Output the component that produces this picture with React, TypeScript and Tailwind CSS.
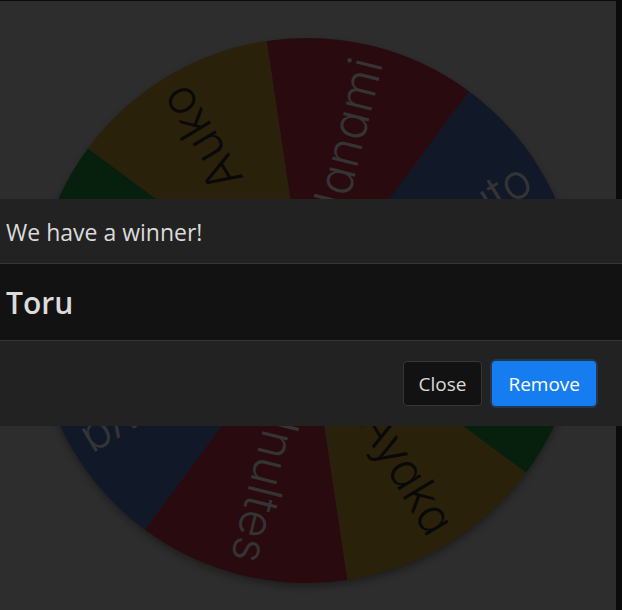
const slices = [
  { name: "Nanami", angle: 284, fill: "#290a0e", ink: "#343434" },
  { name: "Naruto", angle: 329, fill: "#111828", ink: "#343434" },
  { name: "", angle: 14, fill: "#07200e", ink: "#343434" },
  { name: "Ayaka", angle: 59, fill: "#2a210b", ink: "#090909" },
  { name: "Inultes", angle: 104, fill: "#290a0e", ink: "#343434" },
  { name: "Maya", angle: 149, fill: "#111828", ink: "#343434" },
  { name: "", angle: 194, fill: "#07200e", ink: "#343434" },
  { name: "Auko", angle: 239, fill: "#2a210b", ink: "#090909" },
];

const R = 273;

function rim(angle: number) {
  const a = (angle * Math.PI) / 180;
  return `${(R * Math.cos(a)).toFixed(2)} ${(R * Math.sin(a)).toFixed(2)}`;
}

function Wheel() {
  return (
    <svg viewBox="-300 -300 600 600" className="block w-[600px] shrink-0" role="img" aria-label="Wheel of names">
      <defs>
        <filter id="shade" x="-10%" y="-10%" width="120%" height="120%">
          <feDropShadow dx="0" dy="4" stdDeviation="5" floodColor="#000" floodOpacity="0.4" />
        </filter>
      </defs>
      <circle r={R - 1} fill="#202020" filter="url(#shade)" />
      {slices.map((s) => (
        <path key={s.angle} d={`M0 0 L${rim(s.angle - 22.5)} A${R} ${R} 0 0 1 ${rim(s.angle + 22.5)} Z`} fill={s.fill} />
      ))}
      {slices.map((s) => (
        <text
          key={s.angle}
          x="259"
          y="14"
          textAnchor="end"
          fill={s.ink}
          transform={`rotate(${s.angle})`}
          className="font-['Inter',sans-serif] text-[48px] font-light [font-feature-settings:'cv11']"
        >
          {s.name}
        </text>
      ))}
    </svg>
  );
}

export default function App() {
  return (
    <div className="relative flex h-screen flex-col overflow-hidden bg-[#0b0b0b] pt-px pr-[6px] font-['Open_Sans','Noto_Sans',sans-serif]">
      <main className="flex flex-1 justify-center overflow-hidden bg-[#2d2d2d] pt-[10px] pr-[2px]">
        <Wheel />
      </main>
      <div className="absolute inset-0 flex flex-col justify-center pt-[14px]">
        <section role="dialog" aria-labelledby="winner-title" className="w-full overflow-hidden bg-[#222] text-[#dbdbdb]">
          <header className="border-b border-[#363636] px-[6px] py-4">
            <h2 id="winner-title" className="pt-[2px] text-[23px] leading-[30px]">We have a winner!</h2>
          </header>
          <div className="bg-[#121212] px-[6px] py-4">
            <p className="pt-[2px] text-[30px] leading-[42px] font-semibold">Toru</p>
          </div>
          <footer className="flex justify-end gap-[10px] border-t border-[#363636] py-5 pr-[26px] text-[19px]">
            <button className="h-[45px] rounded border border-[#363636] bg-[#121212] px-[15px] pt-[3px]">Close</button>
            <button className="h-[45px] rounded bg-[#167df0] px-4 pt-[3px] text-white shadow-[0_0_0_2px_#203853]">Remove</button>
          </footer>
        </section>
      </div>
    </div>
  );
}
